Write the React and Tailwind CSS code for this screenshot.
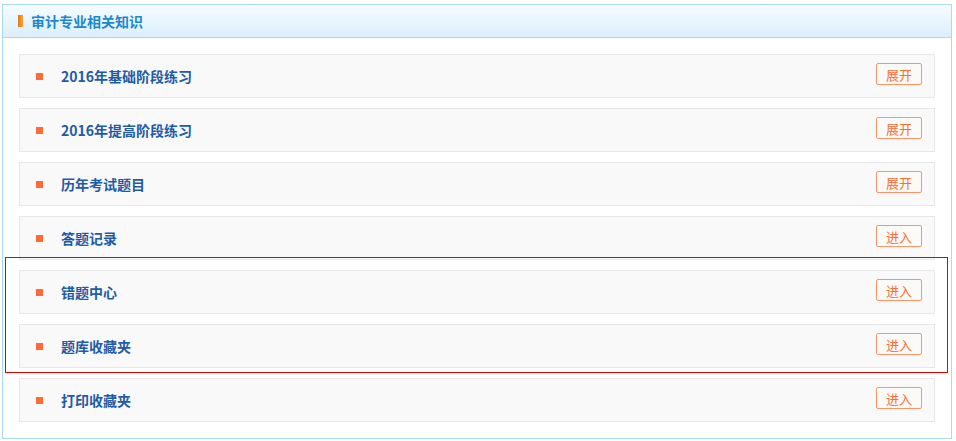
const items = [
  { label: '2016年基础阶段练习', action: '展开' },
  { label: '2016年提高阶段练习', action: '展开' },
  { label: '历年考试题目', action: '展开' },
  { label: '答题记录', action: '进入' },
  { label: '错题中心', action: '进入' },
  { label: '题库收藏夹', action: '进入' },
  { label: '打印收藏夹', action: '进入' },
]

const App = () => {
  return (
    <div className="relative w-[956px] h-[441px] bg-white pt-[4px] pl-[2px] font-['Noto_Sans_CJK_SC','Noto_Sans',sans-serif]">
      <div className="w-[950px] h-[435px] border border-[#a9d9f3] flex flex-col">
        <div className="h-[33px] shrink-0 flex items-center gap-[8px] pl-[15px] border-b border-[#a9d9f3] bg-gradient-to-b from-[#f6fcff] to-[#dbeffc]">
          <span className="w-[5px] h-[12px] bg-gradient-to-r from-[#e8770c] to-[#f7a23c]" />
          <span className="text-[14px] font-bold text-[#1c88d0] leading-none">审计专业相关知识</span>
        </div>
        <div className="flex flex-col gap-[10px] pt-[16px] pl-[16px] pr-[16px]">
          {items.map((item) => (
            <div
              key={item.label}
              className="h-[44px] flex items-center bg-[#f9f9f9] border border-[#e8e8e8]"
            >
              <span className="ml-[16px] w-[7px] h-[7px] bg-[#ff6b35]" />
              <span className="ml-[18px] text-[14px] font-bold text-[#1e5ca8] leading-none">
                {item.label}
              </span>
              <button className="ml-auto mr-[12px] self-start mt-[8px] w-[46px] h-[22px] border border-[#ff9468] rounded-[2px] bg-[#fbfaf6] text-[13px] text-[#ff6b35] leading-none">
                {item.action}
              </button>
            </div>
          ))}
        </div>
      </div>
      <div className="absolute left-[5px] top-[257px] w-[943px] h-[116px] border border-[#e80000] pointer-events-none" />
    </div>
  )
}

export default App
